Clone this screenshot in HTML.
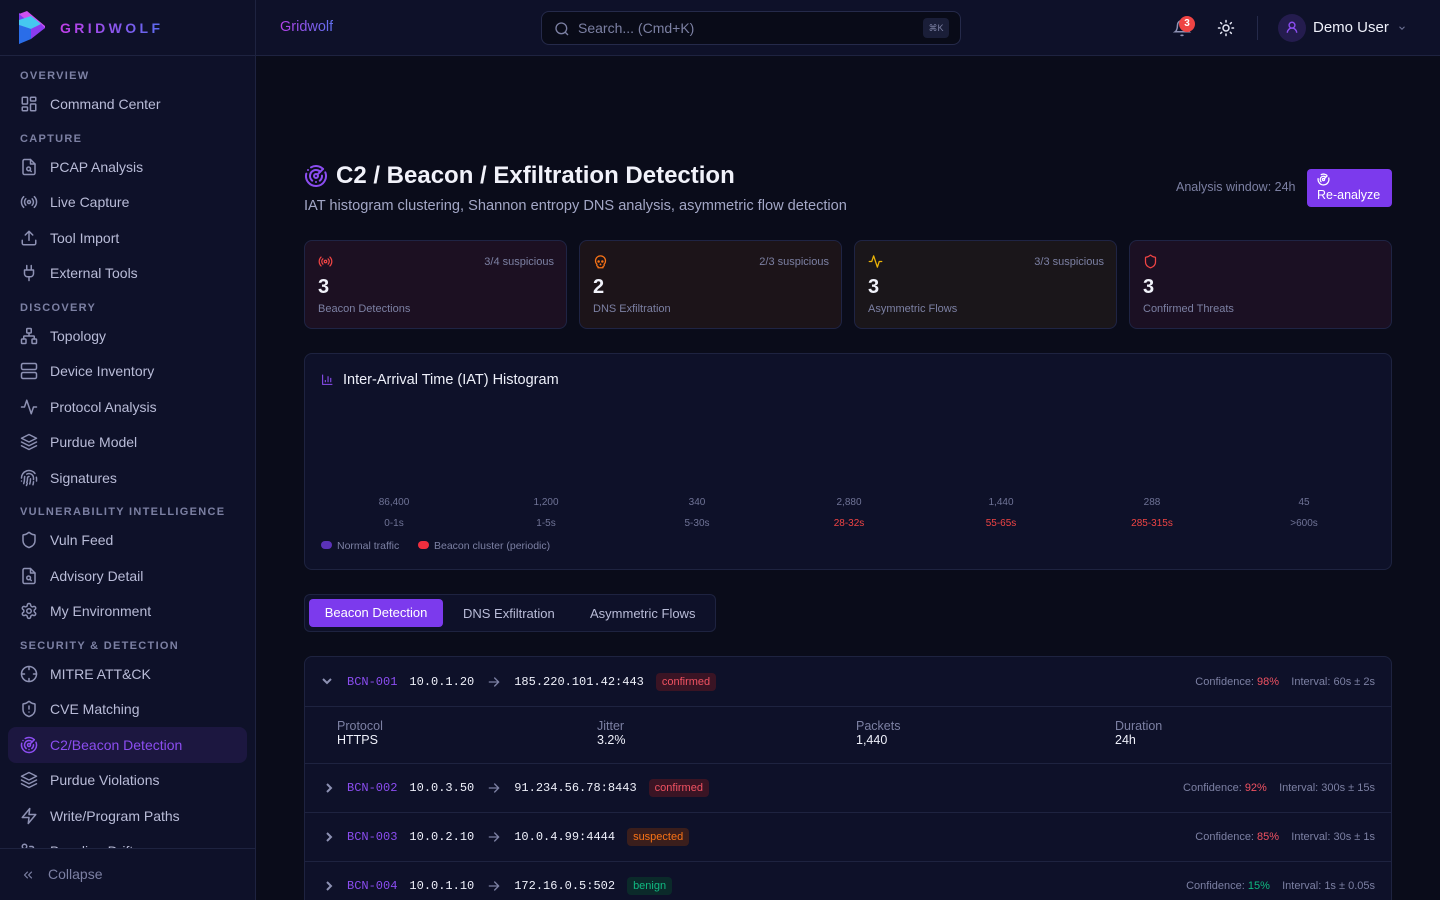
<!DOCTYPE html>
<html style="width:1440px;height:900px;overflow:hidden"><head><meta charset="utf-8">
<style>
*{box-sizing:border-box;margin:0;padding:0}
body{width:1440px;height:900px;overflow:hidden;background:#0a0c1a;font-family:"Liberation Sans",sans-serif;color:#e6e8f5;position:relative}
.abs{position:absolute}
#side{position:absolute;left:0;top:0;width:256px;height:900px;background:#0e1129;border-right:1px solid #1e2340;overflow:hidden}
.lbl{position:absolute;left:20px;font-size:11px;letter-spacing:1.3px;color:#7c80a3;font-weight:bold}
.it{position:absolute;left:8px;width:239px;height:36px;display:flex;align-items:center;padding-left:12px;font-size:14px;color:#b9bcd8;border-radius:8px}
.it svg{width:18px;height:18px;margin-right:12px;fill:none;stroke:#8d91b3;stroke-width:2;stroke-linecap:round;stroke-linejoin:round}
.it.act{background:#1c1740;color:#8b4df0}
.it.act svg{stroke:#8b4df0}
#hdr{position:absolute;left:256px;top:0;right:0;height:56px;background:#0e1129;border-bottom:1px solid #1e2340}
.card{position:absolute;top:240px;width:263px;height:89px;border:1px solid #1f2444;border-radius:8px}
.card .n{position:absolute;left:13px;top:35px;font-size:20px;font-weight:bold;color:#f1f2fa}
.card .t{position:absolute;left:13px;top:62px;font-size:11px;color:#7c80a3}
.card .s{position:absolute;right:12px;top:15px;font-size:11px;color:#7c80a3}
.card svg{position:absolute;left:13px;top:13px;width:15px;height:15px;fill:none;stroke-width:2;stroke-linecap:round;stroke-linejoin:round}
.col{position:absolute;width:152px;text-align:center;font-size:10px;color:#6f7396}
.row{position:absolute;left:0;right:0;border-top:1px solid #1e2340;display:flex;align-items:center;font-size:12px}
.mono{font-family:"Liberation Mono",monospace}
.badge{font-size:11px;padding:3px 6px;border-radius:4px}
.rt{position:absolute;right:16px;font-size:11px;color:#7c80a3}
.chev{margin-left:16px;width:26px;height:12px}
.arr{margin:0 12px;width:16px;height:16px}
</style></head><body>
<div id="side">
 <div class="abs" style="left:0;top:0;width:256px;height:56px;border-bottom:1px solid #1e2340"></div>
 <svg class="abs" style="left:17px;top:11px" width="30" height="34" viewBox="0 0 30 34">
  <polygon points="2,2 28,17 2,33" fill="#7b3cf0"/>
  <polygon points="2,3 10,0 28,15 28,17 18,16" fill="#d050f0"/>
  <polygon points="2,9 14,5 24,13 14,18 2,14" fill="#45c8f0"/>
  <polygon points="2,14 14,18 14,28 2,33" fill="#2a6de8"/>
  <polygon points="14,18 24,13 28,17 14,28" fill="#8a3cf0"/>
 </svg>
 <div class="abs" style="left:60px;top:20px;font-size:14px;font-weight:bold;letter-spacing:3.4px;background:linear-gradient(90deg,#c03ee8,#5a6cf0);-webkit-background-clip:text;color:transparent">GRIDWOLF</div>
 <div class="lbl" style="top:70px">OVERVIEW</div>
 <div class="it" style="top:86px"><svg viewBox="0 0 24 24"><rect x="3" y="3" width="7" height="9" rx="1"/><rect x="14" y="3" width="7" height="5" rx="1"/><rect x="14" y="12" width="7" height="9" rx="1"/><rect x="3" y="16" width="7" height="5" rx="1"/></svg>Command Center</div>
 <div class="lbl" style="top:133px">CAPTURE</div>
 <div class="it" style="top:149px"><svg viewBox="0 0 24 24"><path d="M14 2H6a2 2 0 0 0-2 2v16a2 2 0 0 0 2 2h12a2 2 0 0 0 2-2V8z"/><path d="M14 2v6h6"/><circle cx="11.5" cy="14.5" r="2.5"/><path d="M13.3 16.3 15 18"/></svg>PCAP Analysis</div>
 <div class="it" style="top:184px"><svg viewBox="0 0 24 24"><circle cx="12" cy="12" r="2"/><path d="M16.2 7.8a6 6 0 0 1 0 8.5M7.8 16.2a6 6 0 0 1 0-8.5M19.1 4.9a10 10 0 0 1 0 14.2M4.9 19.1a10 10 0 0 1 0-14.2"/></svg>Live Capture</div>
 <div class="it" style="top:220px"><svg viewBox="0 0 24 24"><path d="M21 15v4a2 2 0 0 1-2 2H5a2 2 0 0 1-2-2v-4M17 8l-5-5-5 5M12 3v12"/></svg>Tool Import</div>
 <div class="it" style="top:255px"><svg viewBox="0 0 24 24"><path d="M12 22v-5M9 8V2M15 8V2M18 8v5a4 4 0 0 1-4 4h-4a4 4 0 0 1-4-4V8z"/></svg>External Tools</div>
 <div class="lbl" style="top:302px">DISCOVERY</div>
 <div class="it" style="top:318px"><svg viewBox="0 0 24 24"><rect x="16" y="16" width="6" height="6" rx="1"/><rect x="2" y="16" width="6" height="6" rx="1"/><rect x="9" y="2" width="6" height="6" rx="1"/><path d="M5 16v-3a1 1 0 0 1 1-1h12a1 1 0 0 1 1 1v3M12 12V8"/></svg>Topology</div>
 <div class="it" style="top:353px"><svg viewBox="0 0 24 24"><rect x="2" y="2" width="20" height="8" rx="2"/><rect x="2" y="14" width="20" height="8" rx="2"/></svg>Device Inventory</div>
 <div class="it" style="top:389px"><svg viewBox="0 0 24 24"><path d="M22 12h-4l-3 9L9 3l-3 9H2"/></svg>Protocol Analysis</div>
 <div class="it" style="top:424px"><svg viewBox="0 0 24 24"><path d="m12 2 10 5-10 5L2 7z"/><path d="m2 12 10 5 10-5M2 17l10 5 10-5"/></svg>Purdue Model</div>
 <div class="it" style="top:460px"><svg viewBox="0 0 24 24"><path d="M12 10a2 2 0 0 0-2 2c0 1 0 4-1 6M14 13c0 2 0 4-1 7M17.3 21c.3-1 .7-2.5.7-4M2 12a10 10 0 0 1 18-6M2 16h.01M22 16c.2-2 .1-4-.2-5M5 19.5C5.5 18 6 15 6 12a6 6 0 0 1 .3-2M8.6 22c.3-1 .9-2 1.1-3M9 6.8a6 6 0 0 1 9 5.2v2"/></svg>Signatures</div>
 <div class="lbl" style="top:506px">VULNERABILITY INTELLIGENCE</div>
 <div class="it" style="top:522px"><svg viewBox="0 0 24 24"><path d="M20 13c0 5-3.5 7.5-7.7 9a1 1 0 0 1-.6 0C7.5 20.5 4 18 4 13V6a1 1 0 0 1 1-1c2 0 4.5-1.200 6.2-2.7a1.2 1.2 0 0 1 1.6 0C14.5 3.8 17 5 19 5a1 1 0 0 1 1 1z"/></svg>Vuln Feed</div>
 <div class="it" style="top:558px"><svg viewBox="0 0 24 24"><path d="M14 2H6a2 2 0 0 0-2 2v16a2 2 0 0 0 2 2h12a2 2 0 0 0 2-2V8z"/><path d="M14 2v6h6"/><circle cx="11.5" cy="14.5" r="2.5"/><path d="M13.3 16.3 15 18"/></svg>Advisory Detail</div>
 <div class="it" style="top:593px"><svg viewBox="0 0 24 24"><circle cx="12" cy="12" r="3"/><path d="M12.2 2h-.4a2 2 0 0 0-2 2v.2a2 2 0 0 1-1 1.7l-.4.3a2 2 0 0 1-2 0l-.2-.1a2 2 0 0 0-2.7.7l-.2.4a2 2 0 0 0 .7 2.7l.2.1a2 2 0 0 1 1 1.7v.5a2 2 0 0 1-1 1.7l-.2.1a2 2 0 0 0-.7 2.7l.2.4a2 2 0 0 0 2.7.7l.2-.1a2 2 0 0 1 2 0l.4.3a2 2 0 0 1 1 1.7v.2a2 2 0 0 0 2 2h.4a2 2 0 0 0 2-2v-.2a2 2 0 0 1 1-1.7l.4-.3a2 2 0 0 1 2 0l.2.1a2 2 0 0 0 2.7-.7l.2-.4a2 2 0 0 0-.7-2.7l-.2-.1a2 2 0 0 1-1-1.7v-.5a2 2 0 0 1 1-1.7l.2-.1a2 2 0 0 0 .7-2.7l-.2-.4a2 2 0 0 0-2.7-.7l-.2.1a2 2 0 0 1-2 0l-.4-.3a2 2 0 0 1-1-1.7V4a2 2 0 0 0-2-2z"/></svg>My Environment</div>
 <div class="lbl" style="top:640px">SECURITY &amp; DETECTION</div>
 <div class="it" style="top:656px"><svg viewBox="0 0 24 24"><circle cx="12" cy="12" r="10"/><path d="M22 12h-4M6 12H2M12 6V2M12 22v-4"/></svg>MITRE ATT&amp;CK</div>
 <div class="it" style="top:691px"><svg viewBox="0 0 24 24"><path d="M20 13c0 5-3.5 7.5-7.7 9a1 1 0 0 1-.6 0C7.5 20.5 4 18 4 13V6a1 1 0 0 1 1-1c2 0 4.5-1.2 6.2-2.7a1.2 1.2 0 0 1 1.6 0C14.5 3.8 17 5 19 5a1 1 0 0 1 1 1z"/><path d="M12 8v4M12 16h.01"/></svg>CVE Matching</div>
 <div class="it act" style="top:727px"><svg viewBox="0 0 24 24"><path d="M19.07 4.93A10 10 0 0 0 6.99 3.34M4 6h.01M2.29 9.62A10 10 0 1 0 21.31 8.35M16.24 7.76A6 6 0 1 0 8.23 16.67M12 18h.01M17.99 11.66A6 6 0 0 1 15.77 16.67"/><circle cx="12" cy="12" r="2"/><path d="m13.41 10.59 5.66-5.66"/></svg>C2/Beacon Detection</div>
 <div class="it" style="top:762px"><svg viewBox="0 0 24 24"><path d="m12 2 10 5-10 5L2 7z"/><path d="m2 12 10 5 10-5M2 17l10 5 10-5"/></svg>Purdue Violations</div>
 <div class="it" style="top:798px"><svg viewBox="0 0 24 24"><path d="M13 2 3 14h9l-1 8 10-12h-9z"/></svg>Write/Program Paths</div>
 <div class="it" style="top:833px"><svg viewBox="0 0 24 24"><circle cx="6" cy="6" r="3"/><path d="M6 9v12M13 6h3a2 2 0 0 1 2 2v7"/></svg>Baseline Drift</div>
 <div class="abs" style="left:0;top:848px;width:256px;height:52px;background:#0e1129;border-top:1px solid #1e2340">
  <svg class="abs" style="left:21px;top:19px" width="14" height="14" viewBox="0 0 24 24" fill="none" stroke="#7c80a3" stroke-width="2" stroke-linecap="round" stroke-linejoin="round"><path d="m11 17-5-5 5-5M18 17l-5-5 5-5"/></svg>
  <div class="abs" style="left:48px;top:17px;font-size:14px;color:#7c80a3">Collapse</div>
 </div>
</div>

<div id="hdr">
 <div class="abs" style="left:24px;top:19px;font-size:14.5px;background:linear-gradient(90deg,#b540e8,#6070f0);-webkit-background-clip:text;color:transparent">Gridwolf</div>
 <div class="abs" style="left:285px;top:11px;width:420px;height:34px;border:1px solid #252a4a;border-radius:8px;background:#090b18">
  <svg class="abs" style="left:12px;top:9px" width="16" height="16" viewBox="0 0 24 24" fill="none" stroke="#7c80a3" stroke-width="2"><circle cx="11" cy="11" r="8"/><path d="m21 21-4.3-4.3"/></svg>
  <div class="abs" style="left:36px;top:8px;font-size:14px;color:#7c80a3">Search... (Cmd+K)</div>
  <div class="abs" style="right:11px;top:6px;width:26px;height:20px;border-radius:4px;background:#1a1e38;font-size:9px;color:#7c80a3;text-align:center;line-height:20px">⌘K</div>
 </div>
 <svg class="abs" style="left:917px;top:19px" width="18" height="18" viewBox="0 0 24 24" fill="none" stroke="#8d91b3" stroke-width="2"><path d="M6 8a6 6 0 0 1 12 0c0 7 3 9 3 9H3s3-2 3-9M10.3 21a1.9 1.9 0 0 0 3.4 0"/></svg>
 <div class="abs" style="left:923px;top:16px;width:16px;height:16px;border-radius:8px;background:#ef4444;font-size:10px;font-weight:bold;text-align:center;line-height:16px;color:#fff">3</div>
 <svg class="abs" style="left:961px;top:19px" width="18" height="18" viewBox="0 0 24 24" fill="none" stroke="#e6e8f5" stroke-width="2" stroke-linecap="round"><circle cx="12" cy="12" r="4"/><path d="M12 2v2M12 20v2M4.9 4.9l1.4 1.4M17.7 17.7l1.4 1.4M2 12h2M20 12h2M6.3 17.7l-1.4 1.4M19.1 4.9l-1.4 1.4"/></svg>
 <div class="abs" style="left:1001px;top:16px;width:1px;height:24px;background:#252a4a"></div>
 <div class="abs" style="left:1022px;top:14px;width:28px;height:28px;border-radius:14px;background:#241c4e"></div>
 <svg class="abs" style="left:1029px;top:20px" width="14" height="15" viewBox="0 0 24 24" fill="none" stroke="#8b4df0" stroke-width="2.4"><circle cx="12" cy="8" r="5"/><path d="M20 21a8 8 0 0 0-16 0"/></svg>
 <div class="abs" style="left:1057px;top:19px;font-size:15px;color:#eef0fa">Demo User</div>
 <svg class="abs" style="left:1141px;top:23px" width="10" height="10" viewBox="0 0 24 24" fill="none" stroke="#6f7396" stroke-width="2.5"><path d="m6 9 6 6 6-6"/></svg>
</div>

<!-- Title -->
<svg class="abs" style="left:304px;top:164px" width="24" height="24" viewBox="0 0 24 24" fill="none" stroke="#8b4df0" stroke-width="2" stroke-linecap="round"><path d="M19.07 4.93A10 10 0 0 0 6.99 3.34M4 6h.01M2.29 9.62A10 10 0 1 0 21.31 8.35M16.24 7.76A6 6 0 1 0 8.23 16.67M12 18h.01M17.99 11.66A6 6 0 0 1 15.77 16.67"/><circle cx="12" cy="12" r="2"/><path d="m13.41 10.59 5.66-5.66"/></svg>
<div class="abs" style="left:336px;top:162px;font-size:24px;font-weight:bold;color:#f1f2fa">C2 / Beacon / Exfiltration Detection</div>
<div class="abs" style="left:304px;top:198px;font-size:14.6px;color:#a3a7c6">IAT histogram clustering, Shannon entropy DNS analysis, asymmetric flow detection</div>
<div class="abs" style="left:1176px;top:180px;font-size:12.5px;color:#7c80a3">Analysis window: 24h</div>
<div class="abs" style="left:1307px;top:169px;width:85px;height:38px;border-radius:4px;background:#7c3aed">
 <svg class="abs" style="left:10px;top:4px" width="13" height="13" viewBox="0 0 24 24" fill="none" stroke="#fff" stroke-width="2.4"><path d="M19.07 4.93A10 10 0 0 0 6.99 3.34M2.29 9.62A10 10 0 1 0 21.31 8.35M16.24 7.76A6 6 0 1 0 8.23 16.67"/><circle cx="12" cy="12" r="2"/><path d="m13.41 10.59 5.66-5.66"/></svg>
 <div class="abs" style="left:10px;top:19px;font-size:12.5px;color:#fff">Re-analyze</div>
</div>

<!-- Cards -->
<div class="card" style="left:304px;background:#1c1022"><svg viewBox="0 0 24 24" stroke="#ef4444"><circle cx="12" cy="12" r="2"/><path d="M16.2 7.8a6 6 0 0 1 0 8.5M7.8 16.2a6 6 0 0 1 0-8.5M19.1 4.9a10 10 0 0 1 0 14.2M4.9 19.1a10 10 0 0 1 0-14.2"/></svg><div class="s">3/4 suspicious</div><div class="n">3</div><div class="t">Beacon Detections</div></div>
<div class="card" style="left:579px;background:#1c1419"><svg viewBox="0 0 24 24" stroke="#f97316"><circle cx="9" cy="12" r="1"/><circle cx="15" cy="12" r="1"/><path d="M8 20v2h8v-2M12.5 17l-.5-1-.5 1z"/><path d="M16 20a2 2 0 0 0 1.56-3.25 8 8 0 1 0-11.12 0A2 2 0 0 0 8 20"/></svg><div class="s">2/3 suspicious</div><div class="n">2</div><div class="t">DNS Exfiltration</div></div>
<div class="card" style="left:854px;background:#1a161a"><svg viewBox="0 0 24 24" stroke="#eab308"><path d="M22 12h-4l-3 9L9 3l-3 9H2"/></svg><div class="s">3/3 suspicious</div><div class="n">3</div><div class="t">Asymmetric Flows</div></div>
<div class="card" style="left:1129px;background:#1b1023"><svg viewBox="0 0 24 24" stroke="#ef4444"><path d="M20 13c0 5-3.5 7.5-7.7 9a1 1 0 0 1-.6 0C7.5 20.5 4 18 4 13V6a1 1 0 0 1 1-1c2 0 4.5-1.2 6.2-2.7a1.2 1.2 0 0 1 1.6 0C14.5 3.8 17 5 19 5a1 1 0 0 1 1 1z"/></svg><div class="n">3</div><div class="t">Confirmed Threats</div></div>

<!-- Histogram -->
<div class="abs" style="left:304px;top:353px;width:1088px;height:217px;background:#0e1129;border:1px solid #1e2340;border-radius:8px">
 <svg class="abs" style="left:16px;top:19px" width="13" height="13" viewBox="0 0 24 24" fill="none" stroke="#8b4df0" stroke-width="2"><path d="M3 3v18h18M8 17v-4M13 17V6M18 17V9"/></svg>
 <div class="abs" style="left:38px;top:18px;font-size:14.5px;color:#eef0fa">Inter-Arrival Time (IAT) Histogram</div>
 <div class="col" style="left:13px;top:143px">86,400</div><div class="col" style="left:13px;top:164px">0-1s</div>
 <div class="col" style="left:165px;top:143px">1,200</div><div class="col" style="left:165px;top:164px">1-5s</div>
 <div class="col" style="left:316px;top:143px">340</div><div class="col" style="left:316px;top:164px">5-30s</div>
 <div class="col" style="left:468px;top:143px">2,880</div><div class="col" style="left:468px;top:164px;color:#ef4444">28-32s</div>
 <div class="col" style="left:620px;top:143px">1,440</div><div class="col" style="left:620px;top:164px;color:#ef4444">55-65s</div>
 <div class="col" style="left:771px;top:143px">288</div><div class="col" style="left:771px;top:164px;color:#ef4444">285-315s</div>
 <div class="col" style="left:923px;top:143px">45</div><div class="col" style="left:923px;top:164px">&gt;600s</div>
 <div class="abs" style="left:16px;top:187px;width:11px;height:8px;border-radius:4px;background:#5b32b8"></div>
 <div class="abs" style="left:32px;top:186px;font-size:10.5px;color:#7c80a3">Normal traffic</div>
 <div class="abs" style="left:113px;top:187px;width:11px;height:8px;border-radius:4px;background:#ef2e3e"></div>
 <div class="abs" style="left:129px;top:186px;font-size:10.5px;color:#7c80a3">Beacon cluster (periodic)</div>
</div>

<!-- Tabs -->
<div class="abs" style="left:304px;top:594px;width:412px;height:38px;background:#0e1129;border:1px solid #1e2340;border-radius:6px;font-size:13px">
 <div class="abs" style="left:4px;top:4px;width:134px;height:28px;border-radius:4px;background:#7c3aed;color:#fff;text-align:center;line-height:28px">Beacon Detection</div>
 <div class="abs" style="left:158px;top:11px;color:#b9bcd8">DNS Exfiltration</div>
 <div class="abs" style="left:285px;top:11px;color:#b9bcd8">Asymmetric Flows</div>
</div>

<!-- Table -->
<div class="abs" style="left:304px;top:656px;width:1088px;height:260px;background:#0e1129;border:1px solid #1e2340;border-radius:8px;overflow:hidden">
 <div class="row" style="top:0;height:49px;border-top:none">
  <svg class="chev" viewBox="0 0 24 12" fill="none" stroke="#8d91b3" stroke-width="2"><path d="m1 3 4 4 4-4"/></svg>
  <span class="mono" style="color:#8b4df0">BCN-001</span><span class="mono" style="margin-left:12px;color:#eef0fa">10.0.1.20</span><svg class="arr" viewBox="0 0 24 24" fill="none" stroke="#7c80a3" stroke-width="2" stroke-linecap="round"><path d="M5 12h14M13 6l6 6-6 6"/></svg><span class="mono" style="color:#eef0fa">185.220.101.42:443</span>
  <span class="badge" style="margin-left:12px;background:#3a1424;color:#f05262">confirmed</span>
  <span class="rt">Confidence: <span style="color:#f05262">98%</span>&nbsp;&nbsp;&nbsp;&nbsp;Interval: 60s ± 2s</span>
 </div>
 <div class="row" style="top:49px;height:57px;font-size:12.5px">
  <div class="abs" style="left:32px;top:12px;color:#7c80a3">Protocol<br><span style="color:#eef0fa">HTTPS</span></div>
  <div class="abs" style="left:292px;top:12px;color:#7c80a3">Jitter<br><span style="color:#eef0fa">3.2%</span></div>
  <div class="abs" style="left:551px;top:12px;color:#7c80a3">Packets<br><span style="color:#eef0fa">1,440</span></div>
  <div class="abs" style="left:810px;top:12px;color:#7c80a3">Duration<br><span style="color:#eef0fa">24h</span></div>
 </div>
 <div class="row" style="top:106px;height:49px">
  <svg class="chev" viewBox="0 0 24 12" fill="none" stroke="#8d91b3" stroke-width="2"><path d="m5 2 4 4-4 4"/></svg>
  <span class="mono" style="color:#8b4df0">BCN-002</span><span class="mono" style="margin-left:12px;color:#eef0fa">10.0.3.50</span><svg class="arr" viewBox="0 0 24 24" fill="none" stroke="#7c80a3" stroke-width="2" stroke-linecap="round"><path d="M5 12h14M13 6l6 6-6 6"/></svg><span class="mono" style="color:#eef0fa">91.234.56.78:8443</span>
  <span class="badge" style="margin-left:12px;background:#3a1424;color:#f05262">confirmed</span>
  <span class="rt">Confidence: <span style="color:#f05262">92%</span>&nbsp;&nbsp;&nbsp;&nbsp;Interval: 300s ± 15s</span>
 </div>
 <div class="row" style="top:155px;height:49px">
  <svg class="chev" viewBox="0 0 24 12" fill="none" stroke="#8d91b3" stroke-width="2"><path d="m5 2 4 4-4 4"/></svg>
  <span class="mono" style="color:#8b4df0">BCN-003</span><span class="mono" style="margin-left:12px;color:#eef0fa">10.0.2.10</span><svg class="arr" viewBox="0 0 24 24" fill="none" stroke="#7c80a3" stroke-width="2" stroke-linecap="round"><path d="M5 12h14M13 6l6 6-6 6"/></svg><span class="mono" style="color:#eef0fa">10.0.4.99:4444</span>
  <span class="badge" style="margin-left:12px;background:#3a1e1c;color:#f97316">suspected</span>
  <span class="rt">Confidence: <span style="color:#f05262">85%</span>&nbsp;&nbsp;&nbsp;&nbsp;Interval: 30s ± 1s</span>
 </div>
 <div class="row" style="top:204px;height:49px">
  <svg class="chev" viewBox="0 0 24 12" fill="none" stroke="#8d91b3" stroke-width="2"><path d="m5 2 4 4-4 4"/></svg>
  <span class="mono" style="color:#8b4df0">BCN-004</span><span class="mono" style="margin-left:12px;color:#eef0fa">10.0.1.10</span><svg class="arr" viewBox="0 0 24 24" fill="none" stroke="#7c80a3" stroke-width="2" stroke-linecap="round"><path d="M5 12h14M13 6l6 6-6 6"/></svg><span class="mono" style="color:#eef0fa">172.16.0.5:502</span>
  <span class="badge" style="margin-left:12px;background:#0b2a2a;color:#10b981">benign</span>
  <span class="rt">Confidence: <span style="color:#10b981">15%</span>&nbsp;&nbsp;&nbsp;&nbsp;Interval: 1s ± 0.05s</span>
 </div>
</div>
</body></html>
